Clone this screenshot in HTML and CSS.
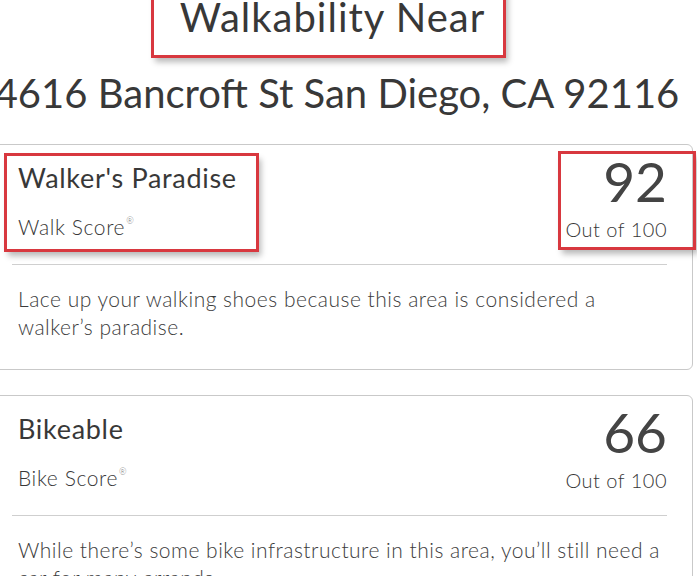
FILE: index.html
```html
<!DOCTYPE html>
<html lang="en">

<head>
    <meta charset="UTF-8">
    <meta name="viewport" content="width=device-width, initial-scale=1.0">

    <title>Walkability Near 4616 Bancroft St</title>
    <link rel="stylesheet" href="styles.css">
</head>

<body>
    <div class="page">
        <div class="head">
            <h1 class="marked">Walkability Near</h1>
        </div>
        <h2 class="address">4616 Bancroft St San Diego, CA 92116</h2>

        <div class="card">
            <div class="row">
                <div class="label marked">
                    <h3>Walker's Paradise</h3>
                    <p class="kind">Walk Score<sup>&reg;</sup></p>
                </div>
                <div class="score marked">
                    <span class="num">92</span>
                    <span class="outof">Out of 100</span>
                </div>
            </div>
            <hr>
            <p class="desc">Lace up your walking shoes because this area is considered a walker’s paradise.</p>
        </div>

        <div class="card">
            <div class="row">
                <div class="label">
                    <h3>Bikeable</h3>
                    <p class="kind">Bike Score<sup>&reg;</sup></p>
                </div>
                <div class="score">
                    <span class="num">66</span>
                    <span class="outof">Out of 100</span>
                </div>
            </div>
            <hr>
            <p class="desc">While there’s some bike infrastructure in this area, you’ll still need a car for many errands.</p>
        </div>
    </div>
</body>

</html>
```

FILE: styles.css
```css
body {
    margin: 0;
    font-family: Lato, "Open Sans", sans-serif;
    color: #383838;
    background: #fff;
    overflow: hidden;
}

.page {
    margin-left: -6px;
    width: 699px;
}

.head {
    display: flex;
    justify-content: center;
    padding-right: 30px;
}

h1 {
    margin: -20px 0 0;
    padding: 15px 18px 16px 26px;
    font-size: 40px;
    font-weight: 400;
    letter-spacing: 1px;
    line-height: 44px;
}

/* red callout boxes */
.marked {
    box-shadow: 0 0 0 3px #d8383f, 3px 5px 6px 2px rgba(0, 0, 0, 0.28);
}

.address {
    margin: 14px 0 0 -13px;
    text-align: center;
    font-size: 40px;
    font-weight: 400;
    line-height: 48px;
    white-space: nowrap;
}

.card {
    margin-top: 27px;
    border: 1px solid #c9c9c9;
    border-radius: 6px;
    padding: 11px 25px 28px 23px;
}

.card + .card {
    margin-top: 25px;
}

.row {
    display: flex;
    justify-content: space-between;
    align-items: flex-start;
}

.label {
    margin-left: -11px;
    padding: 7px 0 10px 11px;
    width: 238px;
}

.label h3 {
    margin: 0;
    font-size: 27px;
    font-weight: 400;
    letter-spacing: 0.7px;
    line-height: 30px;
}

.kind {
    margin: 22px 0 0;
    font-size: 21px;
    font-weight: 300;
    letter-spacing: 0.6px;
    line-height: 24px;
}

.kind sup {
    font-size: 9px;
    line-height: 0;
    vertical-align: 11px;
    margin-left: 1px;
    color: #777;
}

.score {
    margin: -2px -26px 0 0;
    padding: 0 26px 6px 3px;
    width: 103px;
    text-align: right;
    display: flex;
    flex-direction: column;
}

.num {
    font-size: 55px;
    line-height: 54px;
    color: #444;
}

.outof {
    margin-top: 9px;
    font-size: 20px;
    font-weight: 300;
    letter-spacing: 0.5px;
    line-height: 24px;
}

hr {
    margin: 15px 0 0 -6px;
    border: 0;
    border-top: 1px solid #cfcfcf;
}

.desc {
    margin: 20px 0 0;
    font-size: 21px;
    font-weight: 300;
    letter-spacing: 0.5px;
    line-height: 28px;
    color: #3c3c3c;
}
```
